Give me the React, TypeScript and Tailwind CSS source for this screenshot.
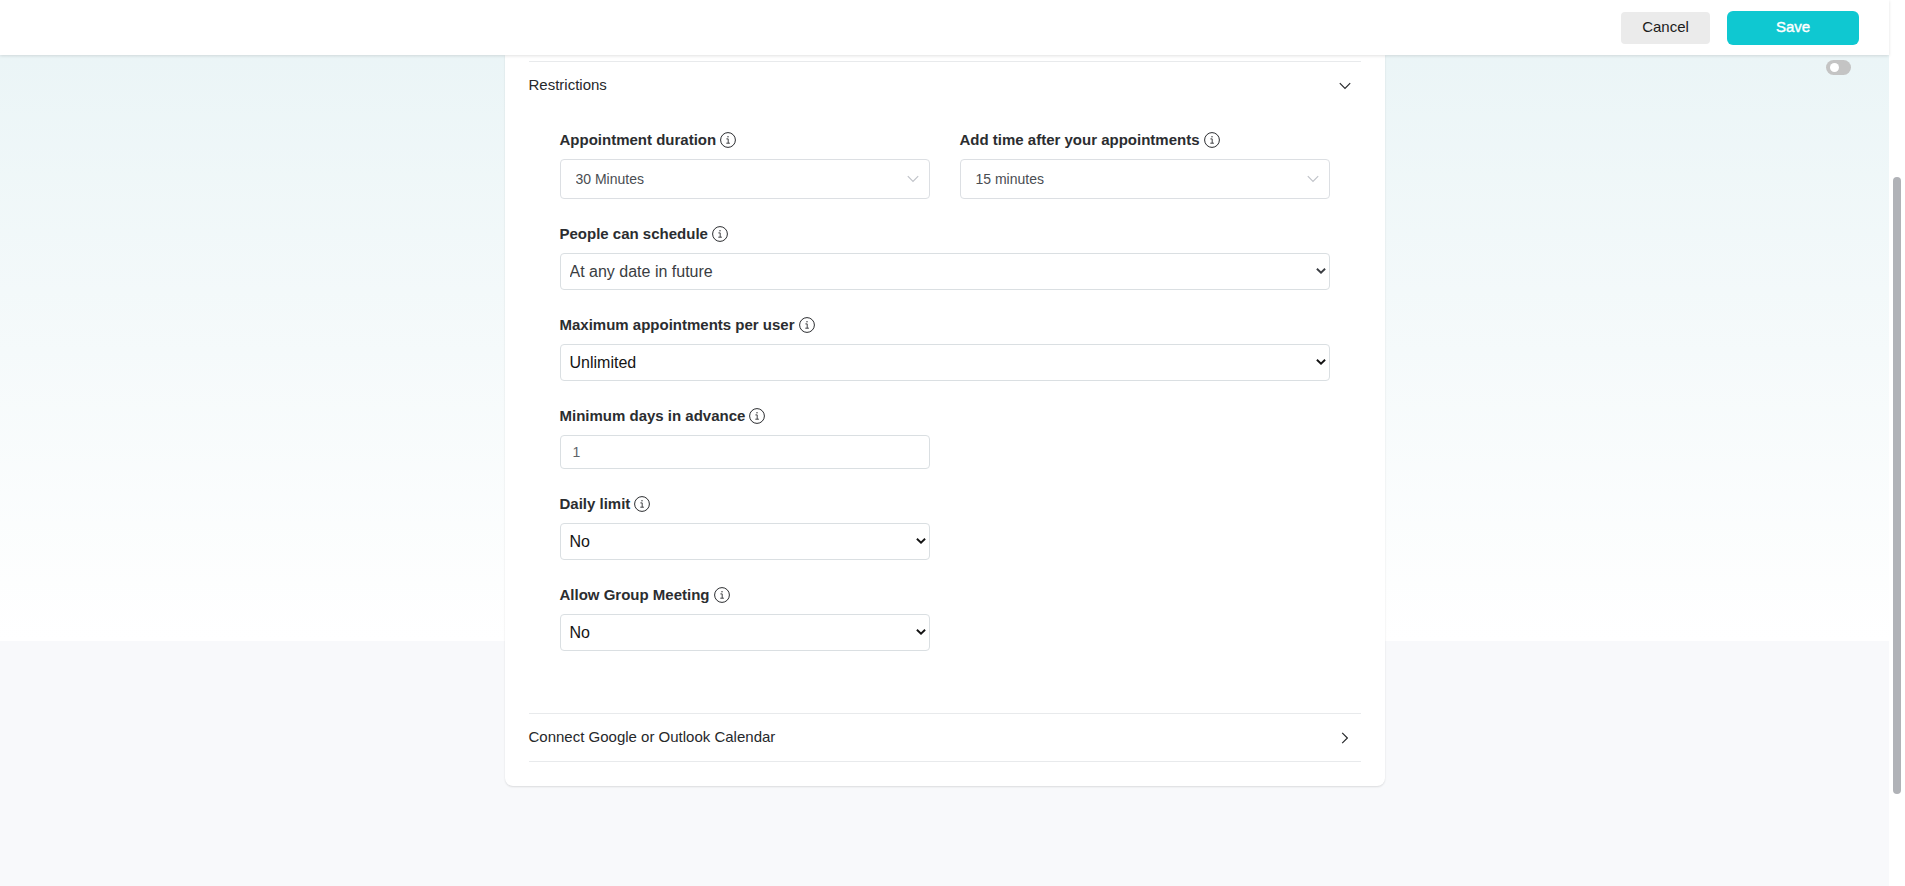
import { useState } from "react";
import type { ReactNode } from "react";

function InfoIcon() {
  return (
    <svg viewBox="0 0 16 16" className="w-4 h-4 shrink-0" fill="none" stroke="currentColor" aria-hidden="true">
      <circle cx="8" cy="8" r="7.4" strokeWidth="1" />
      <path d="M6.4 6.9h1.8v4.2M6.3 11.2h3.6" strokeWidth="0.9" />
      <circle cx="8" cy="4.8" r="0.7" fill="currentColor" stroke="none" />
    </svg>
  );
}

function ThinChevron({ className }: { className: string }) {
  return (
    <svg viewBox="0 0 12 12" className={className} fill="none" stroke="currentColor" strokeWidth="1.2" aria-hidden="true">
      <path d="M0.8 3.2 6 8.4 11.2 3.2" />
    </svg>
  );
}

function Field({ id, label, children }: { id: string; label: string; children: ReactNode }) {
  return (
    <div>
      <div className="flex items-center gap-1 mb-2 text-[#2b2d30]">
        <label htmlFor={id} className="text-[15px] leading-[22px] font-bold">
          {label}
        </label>
        <InfoIcon />
      </div>
      {children}
    </div>
  );
}

function SoftSelect({ id, options }: { id: string; options: string[] }) {
  return (
    <div className="relative">
      <select
        id={id}
        className="block w-full h-10 appearance-none rounded border border-[#dcdfe3] bg-white px-[15px] text-sm text-[#4a4d52]"
      >
        {options.map((o) => (
          <option key={o}>{o}</option>
        ))}
      </select>
      <ThinChevron className="absolute right-[11px] top-3.5 w-3 h-3 text-[#c0c3c9] pointer-events-none" />
    </div>
  );
}

function PlainSelect({ id, options, tone }: { id: string; options: string[]; tone: string }) {
  return (
    <div className={`relative ${tone}`}>
      <select
        id={id}
        className="block w-full h-[37px] appearance-none rounded border border-[#dadfe2] bg-white px-[9px] text-base"
      >
        {options.map((o) => (
          <option key={o}>{o}</option>
        ))}
      </select>
      <svg
        viewBox="0 0 10 6"
        className="absolute right-1 top-[15px] w-2.5 h-1.5 pointer-events-none"
        fill="none"
        stroke="currentColor"
        strokeWidth="1.9"
        aria-hidden="true"
      >
        <path d="M0.9 0.8 5 4.7 9.1 0.8" />
      </svg>
    </div>
  );
}

function SectionHeader({ title, open, onToggle }: { title: string; open: boolean; onToggle: () => void }) {
  return (
    <button
      type="button"
      aria-expanded={open}
      onClick={onToggle}
      className="flex w-full h-[47px] items-center justify-between pr-2.5 text-[15px] text-[#26282b]"
    >
      {title}
      <ThinChevron className={open ? "w-3 h-3" : "w-3 h-3 -rotate-90"} />
    </button>
  );
}

export default function App() {
  const [restrictionsOpen, setRestrictionsOpen] = useState(true);
  const [calendarOpen, setCalendarOpen] = useState(false);
  const [days, setDays] = useState("1");

  return (
    <div className="flex min-h-screen bg-white font-['Liberation_Sans',Arial,sans-serif]">
      <div className="flex-1 min-w-0 bg-[#f8f9fb] bg-[linear-gradient(to_bottom,#e9f4f6,#ffffff)] bg-[length:100%_641px] bg-no-repeat">
        <header className="relative z-10 flex h-[55px] items-center justify-end gap-[17px] bg-white pr-[30px] shadow-[0_1px_3px_rgba(0,0,0,0.12)]">
          <button type="button" className="w-[89px] h-8 rounded bg-[#ebebeb] text-[15px] text-[#1c1c1c]">
            Cancel
          </button>
          <button type="button" className="w-[132px] h-[34px] rounded-md bg-[#0fc8d1] text-[15px] text-white [-webkit-text-stroke:0.4px_white]">
            Save
          </button>
        </header>

        <main className="flex pb-[99px]">
          <div className="flex-1" />

          <section className="w-[880px] rounded-b-lg bg-white px-6 pt-1.5 pb-6 shadow-[0_1px_2px_rgba(0,0,0,0.12)]">
            <div className="border-t border-[#e8eaec]">
              <SectionHeader
                title="Restrictions"
                open={restrictionsOpen}
                onToggle={() => setRestrictionsOpen(!restrictionsOpen)}
              />
              {restrictionsOpen && (
                <div className="grid grid-cols-2 gap-x-[30px] gap-y-6 px-[31px] pt-5 pb-[62px]">
                  <Field id="duration" label="Appointment duration">
                    <SoftSelect id="duration" options={["30 Minutes", "45 Minutes", "60 Minutes"]} />
                  </Field>
                  <Field id="buffer" label="Add time after your appointments">
                    <SoftSelect id="buffer" options={["15 minutes", "30 minutes"]} />
                  </Field>
                  <div className="col-span-2">
                    <Field id="schedule" label="People can schedule">
                      <PlainSelect id="schedule" tone="text-[#3a3d42]" options={["At any date in future", "Within a date range"]} />
                    </Field>
                  </div>
                  <div className="col-span-2">
                    <Field id="max" label="Maximum appointments per user">
                      <PlainSelect id="max" tone="text-[#141414]" options={["Unlimited", "Limited"]} />
                    </Field>
                  </div>
                  <div className="col-start-1">
                    <Field id="days" label="Minimum days in advance">
                      <input
                        id="days"
                        type="text"
                        value={days}
                        onChange={(e) => setDays(e.target.value)}
                        className="block w-full h-[34px] rounded border border-[#dadfe2] bg-white px-3 text-sm text-[#5f6368]"
                      />
                    </Field>
                  </div>
                  <div className="col-start-1">
                    <Field id="daily" label="Daily limit">
                      <PlainSelect id="daily" tone="text-[#141414]" options={["No", "Yes"]} />
                    </Field>
                  </div>
                  <div className="col-start-1">
                    <Field id="group" label="Allow Group Meeting">
                      <PlainSelect id="group" tone="text-[#141414]" options={["No", "Yes"]} />
                    </Field>
                  </div>
                </div>
              )}
            </div>
            <div className="border-y border-[#e8eaec]">
              <SectionHeader
                title="Connect Google or Outlook Calendar"
                open={calendarOpen}
                onToggle={() => setCalendarOpen(!calendarOpen)}
              />
            </div>
          </section>

          <div className="flex flex-1 items-start justify-end">
            <input
              type="checkbox"
              role="switch"
              aria-label="Enable"
              className="mt-[5px] mr-[38px] h-[15px] w-[25px] appearance-none rounded-full bg-[#c4c4c4] before:block before:w-[9px] before:h-[9px] before:m-[3px] before:ml-1 before:rounded-full before:bg-white checked:before:ml-3"
            />
          </div>
        </main>
      </div>

      <div className="w-4 px-1 pt-[177px]" aria-hidden="true">
        <div className="h-[617px] rounded-full bg-[#b0b2b7]" />
      </div>
    </div>
  );
}
